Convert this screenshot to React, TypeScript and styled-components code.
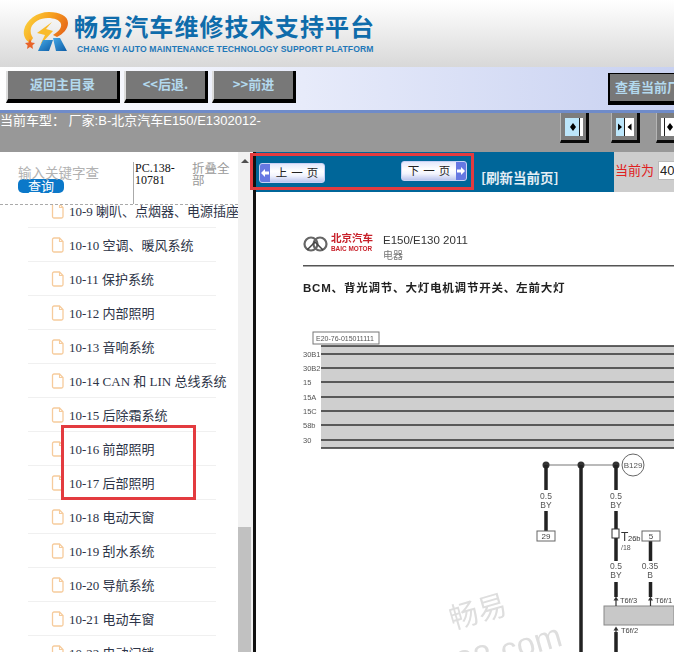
import React, { FC } from 'react';
import styled, { createGlobalStyle } from 'styled-components';

const GlobalStyle = createGlobalStyle`
  html, body {
    margin: 0;
    padding: 0;
    background: #fff;
  }
`;

const cjk = '"Noto Sans CJK SC", sans-serif';

const Page = styled.div`
  position: relative;
  width: 674px;
  height: 652px;
  overflow: hidden;
  display: flex;
  flex-direction: column;
  font-family: "Liberation Sans", ${cjk};
`;

const Header = styled.header`
  flex: 0 0 67px;
  box-sizing: border-box;
  display: flex;
  align-items: flex-start;
  gap: 6px;
  padding: 12px 0 0 23px;
  background: linear-gradient(180deg, #ffffff 0%, #f2f2f2 35%, #d8d8d8 100%);
`;

const BrandText = styled.div`
  display: flex;
  flex-direction: column;
`;

const BrandTitle = styled.div`
  font-family: ${cjk};
  font-size: 24px;
  line-height: 28px;
  font-weight: 700;
  letter-spacing: 1.1px;
  color: #0f6cab;
  white-space: nowrap;
`;

const BrandSub = styled.div`
  margin: 3px 0 0 3px;
  font-size: 8.6px;
  line-height: 12px;
  font-weight: 700;
  letter-spacing: 0.12px;
  color: #1f78b8;
  white-space: nowrap;
`;

const Toolbar = styled.nav`
  flex: 0 0 46px;
  box-sizing: border-box;
  display: flex;
  gap: 4px;
  padding: 4px 0 0 6px;
  overflow: hidden;
  border-bottom: 3px solid #6f8bc9;
  background: linear-gradient(90deg, #ffffff 0%, #e7ebfa 45%, #c8d1f1 100%);
`;

const ToolButton = styled.button<{ $width: number; $offset?: number; $framed?: boolean }>`
  flex: 0 0 ${({ $width }) => $width}px;
  height: 32px;
  box-sizing: border-box;
  margin: ${({ $framed }) => ($framed ? '2px' : '0')} 0 0 ${({ $offset }) => $offset ?? 0}px;
  padding: 0 0 3px;
  border-style: solid;
  border-width: ${({ $framed }) => ($framed ? '1px 1px 4px 2px' : '0 3px 4px 2px')};
  border-color: ${({ $framed }) =>
    $framed ? '#000 #000 #000 #000' : '#777 #000 #000 #ddd'};
  background: #787878;
  color: #b3d9ee;
  font-family: ${cjk};
  font-size: 13px;
  font-weight: 700;
  white-space: nowrap;
  text-align: ${({ $framed }) => ($framed ? 'left' : 'center')};
  text-indent: ${({ $framed }) => ($framed ? '5px' : '0')};
`;

const InfoBar = styled.div`
  flex: 0 0 39px;
  box-sizing: border-box;
  display: flex;
  align-items: flex-start;
  overflow: hidden;
  background: #989898;
`;

const CarInfo = styled.div`
  flex: 0 0 560px;
  font-size: 13px;
  line-height: 16px;
  color: #fff;
  white-space: nowrap;
`;

const ViewButton = styled.div<{ $gap?: number }>`
  flex: 0 0 29px;
  width: 29px;
  height: 30px;
  box-sizing: border-box;
  margin-left: ${({ $gap }) => $gap ?? 0}px;
  padding: 5px 3px 4px 4px;
  border-left: 1px solid #b5b5b5;
  border-right: 3px solid #0a0a0a;
  border-bottom: 3px solid #0a0a0a;
  background: #7d7d7d;
`;

const Main = styled.div`
  flex: 1;
  min-height: 0;
  display: flex;
`;

const Sidebar = styled.aside`
  flex: 0 0 238px;
  display: flex;
  flex-direction: column;
  min-height: 0;
  background: #fff;
`;

const SearchArea = styled.div`
  position: relative;
  z-index: 1;
  flex: 0 0 53px;
  box-sizing: border-box;
  display: flex;
  border-bottom: 1px dashed #aaa;
  background: #fff;
`;

const SearchField = styled.div`
  flex: 0 0 133px;
  box-sizing: border-box;
  padding: 13px 0 0 18px;
`;

const SearchHint = styled.div`
  font-family: ${cjk};
  font-size: 13.5px;
  line-height: 14px;
  color: #b2b2b2;
  white-space: nowrap;
`;

const SearchButton = styled.div`
  width: 46px;
  height: 14px;
  border-radius: 5px;
  background: #0b78c9;
  color: #fff;
  font-family: ${cjk};
  font-size: 13px;
  line-height: 14px;
  text-align: center;
`;

const PartNo = styled.div`
  flex: 0 0 59px;
  box-sizing: border-box;
  height: 42px;
  margin-top: 10px;
  padding: 0 0 0 1px;
  border-left: 1px solid #aaa;
  font-family: "Liberation Serif", serif;
  font-size: 12px;
  line-height: 12px;
  color: #111;
`;

const FoldAll = styled.div`
  width: 38px;
  padding-top: 10px;
  font-family: ${cjk};
  font-size: 12.5px;
  line-height: 12px;
  color: #999;
`;

const TreeClip = styled.div`
  flex: 1;
  min-height: 0;
  overflow: hidden;
`;

const TreeList = styled.ul`
  list-style: none;
  margin: -11px 0 0;
  padding: 0 0 0 28px;
`;

const TreeItem = styled.li`
  box-sizing: border-box;
  width: 188px;
  height: 34px;
  display: flex;
  align-items: center;
  gap: 5px;
  padding-left: 24px;
  border-bottom: 1px solid #f0f0f0;
  font-family: "Liberation Serif", ${cjk};
  font-size: 13px;
  color: #2d3447;
  white-space: nowrap;
`;

const Scrollbar = styled.div`
  position: relative;
  flex: 0 0 15px;
  background: #f1f1f1;
`;

const ScrollArrow = styled.div`
  position: absolute;
  top: 7px;
  left: 3px;
  width: 0;
  height: 0;
  border-left: 4px solid transparent;
  border-right: 4px solid transparent;
  border-bottom: 4px solid #505050;
`;

const ScrollThumb = styled.div`
  position: absolute;
  top: 375px;
  bottom: 0;
  left: 0;
  width: 13px;
  background: #c1c1c1;
`;

const Content = styled.section`
  flex: 1;
  min-width: 0;
  display: flex;
  flex-direction: column;
  border-left: 3px solid #111;
`;

const PagerRow = styled.div`
  flex: 0 0 40px;
  display: flex;
`;

const PagerBar = styled.div`
  flex: 0 0 358px;
  box-sizing: border-box;
  display: flex;
  align-items: flex-start;
  padding: 9px 0 0 3px;
  background: #006699;
`;

const PageButton = styled.div<{ $dir: 'prev' | 'next' }>`
  flex: 0 0 66px;
  height: 20px;
  box-sizing: border-box;
  display: flex;
  flex-direction: ${({ $dir }) => ($dir === 'prev' ? 'row' : 'row-reverse')};
  margin: ${({ $dir }) => ($dir === 'prev' ? '2px 0 0' : '0 0 0 76px')};
  border: 1px solid #c9d1f5;
  border-radius: 3px;
  background: linear-gradient(180deg, #e4e8fb 0%, #ffffff 40%, #f2f4fe 65%, #bcc6ee 100%);
  overflow: hidden;
`;

const PageArrow = styled.span`
  flex: 0 0 10px;
  display: flex;
  align-items: center;
  justify-content: center;
  background: #6678e2;
`;

const PageLabel = styled.span`
  flex: 1;
  padding-left: 4px;
  font-family: ${cjk};
  font-size: 11.5px;
  line-height: 17px;
  letter-spacing: 4px;
  text-align: center;
  color: #222;
`;

const RefreshLink = styled.a`
  margin: 7px 0 0 14px;
  font-family: ${cjk};
  font-size: 13.5px;
  line-height: 18px;
  font-weight: 700;
  color: #e4eef5;
  white-space: nowrap;
`;

const CurrentBox = styled.div`
  flex: 1;
  display: flex;
  align-items: flex-start;
  gap: 4px;
  padding: 9px 0 0 1px;
  background: #cdcdcd;
  overflow: hidden;
`;

const CurrentLabel = styled.span`
  font-family: ${cjk};
  font-size: 13px;
  line-height: 18px;
  color: #e02020;
  white-space: nowrap;
`;

const CurrentInput = styled.div`
  flex: 0 0 40px;
  box-sizing: border-box;
  height: 19px;
  padding-left: 1px;
  border: 1px solid #bbb;
  background: #fff;
  font-size: 13px;
  line-height: 17px;
  color: #222;
`;

const Sheet = styled.div`
  flex: 1;
  min-height: 0;
  background: #fff;
`;

const Drawing = styled.svg`
  display: block;
  filter: blur(0.35px);
  font-family: "Liberation Sans", ${cjk};
`;

const Callout = styled.div<{ $x: number; $y: number; $w: number; $h: number }>`
  position: absolute;
  left: ${({ $x }) => $x}px;
  top: ${({ $y }) => $y}px;
  width: ${({ $w }) => $w}px;
  height: ${({ $h }) => $h}px;
  box-sizing: border-box;
  border: 3px solid #e33b3f;
  pointer-events: none;
`;

const treeItems = [
  '10-9 喇叭、点烟器、电源插座',
  '10-10 空调、暖风系统',
  '10-11 保护系统',
  '10-12 内部照明',
  '10-13 音响系统',
  '10-14 CAN 和 LIN 总线系统',
  '10-15 后除霜系统',
  '10-16 前部照明',
  '10-17 后部照明',
  '10-18 电动天窗',
  '10-19 刮水系统',
  '10-20 导航系统',
  '10-21 电动车窗',
  '10-22 电动门锁',
];

const LogoMark: FC = () => (
  <svg width="45" height="42" viewBox="0 0 45 42">
    <defs>
      <linearGradient id="swirl" x1="0" y1="0.2" x2="1" y2="0.6">
        <stop offset="0" stopColor="#fbd43e" />
        <stop offset="0.5" stopColor="#f7a11e" />
        <stop offset="1" stopColor="#e5641a" />
      </linearGradient>
      <linearGradient id="legs" x1="0" y1="0" x2="1" y2="1">
        <stop offset="0" stopColor="#45a8e6" />
        <stop offset="1" stopColor="#0c5ca6" />
      </linearGradient>
    </defs>
    <path
      d="M7 31C2 28 0 23 1 18 3 8 14 0 26 0c11 0 19 4 19 11 0 6-5 11-11 14l-4-2c5-3 9-7 8-11-1-4-7-6-13-6-8 0-15 4-17 10-1 4 0 7 2 10z"
      fill="url(#swirl)"
    />
    <path d="M29 10L14 21l8 2-5 10 13-14-7-2z" fill="#f9bb2a" />
    <path d="M30 26h7l7 13H33z" fill="url(#legs)" />
    <path d="M20 28h10l-4 11H15z" fill="url(#legs)" />
    <path
      d="M7 27l1.500 3.500 3.500.5-2.600 2.400.6 3.600L7 35l-3 2 .6-3.600L2 31l3.500-.5z"
      fill="#e8642a"
    />
  </svg>
);

const FileIcon: FC = () => (
  <svg width="13" height="16" viewBox="0 0 13 16" style={{ flex: '0 0 13px', marginLeft: -1 }}>
    <path
      d="M1.500 2.500a1.500 1.500 0 0 1 1.500-1.500h5.500l3.500 3.500v9a1.500 1.500 0 0 1-1.500 1.500H3a1.500 1.500 0 0 1-1.500-1.500z"
      fill="#fff"
      stroke="#f6cb9c"
      strokeWidth="1.300"
    />
    <path d="M8.500 1v3.500H12" fill="none" stroke="#f6cb9c" strokeWidth="1.100" />
  </svg>
);

// the small layout switch glyphs: pale blue pane, black rule, black arrow heads
const PaneGlyph: FC<{ variant: 'left' | 'both' | 'right' }> = ({ variant }) => (
  <svg width="18" height="18" viewBox="0 0 18 18" style={{ display: 'block' }}>
    <rect width="18" height="18" fill="#fff" />
    {variant === 'left' && (
      <>
        <rect width="14" height="18" fill="#bce6fb" />
        <rect x="14" width="1" height="18" fill="#222" />
        <path d="M8 5l3 4-3 4-3-4z" fill="#000" />
      </>
    )}
    {variant === 'both' && (
      <>
        <rect width="8" height="18" fill="#bce6fb" />
        <rect x="8" width="1" height="18" fill="#222" />
        <path d="M2 5.500l4 3.500-4 3.500zM15.500 5.500L11.500 9l4 3.500z" fill="#000" />
      </>
    )}
    {variant === 'right' && (
      <>
        <rect x="3" width="1" height="18" fill="#222" />
        <path d="M9 5L6 9l3 4 3-4z" fill="#000" />
      </>
    )}
  </svg>
);

const Arrow: FC<{ flip?: boolean }> = ({ flip }) => (
  <svg width="8" height="8" viewBox="0 0 8 8">
    <path d={flip ? 'M8 4L4 0v2.500H0v3h4V8z' : 'M0 4l4-4v2.500h4v3H4V8z'} fill="#fff" />
  </svg>
);

const busLines = [
  { y: 154, label: '' },
  { y: 162, label: '30B1' },
  { y: 176, label: '30B2' },
  { y: 190, label: '15' },
  { y: 205, label: '15A' },
  { y: 219, label: '15C' },
  { y: 233, label: '58b' },
  { y: 248, label: '30' },
  { y: 256, label: '' },
];

const WireLabel: FC<{ x: number; y: number; top: string; bottom: string }> = ({
  x,
  y,
  top,
  bottom,
}) => (
  <g fontSize="8.500" fill="#555" textAnchor="middle">
    <text x={x} y={y}>{top}</text>
    <text x={x} y={y + 9}>{bottom}</text>
  </g>
);

// the wiring page, origin at x=256 y=192 of the window
const WiringDiagram: FC = () => (
  <Drawing width="418" height="460" viewBox="0 0 418 460">
    <g fill="none" stroke="#666" strokeWidth="2.200">
      <circle cx="55" cy="52" r="6.500" />
      <circle cx="64" cy="52" r="6.500" />
    </g>
    <path d="M51 58l8-8 8 8" fill="none" stroke="#444" strokeWidth="1.500" />
    <text x="75" y="50" fontSize="10.500" fontWeight="700" fill="#c8202a">北京汽车</text>
    <text x="75" y="59" fontSize="6.400" fontWeight="700" fill="#c8202a">BAIC MOTOR</text>
    <text x="127" y="52" fontSize="11.500" fill="#333">E150/E130 2011</text>
    <text x="127" y="67" fontSize="10" fill="#777">电器</text>
    <rect x="47" y="73" width="371" height="1.500" fill="#555" />
    <text x="47" y="100" fontSize="11.500" fontWeight="700" fill="#222" letterSpacing="0.800">
      BCM、背光调节、大灯电机调节开关、左前大灯
    </text>

    <rect x="57" y="140" width="66" height="12" fill="#fff" stroke="#777" />
    <text x="60" y="149" fontSize="7" fill="#555">E20-76-015011111</text>
    <rect x="65" y="154" width="353" height="102" fill="#cfcfcf" />
    {busLines.map((line) => (
      <g key={line.y}>
        <rect x="65" y={line.y - 0.75} width="353" height="1.500" fill="#333" />
        {line.label && (
          <text x="47" y={line.y + 3} fontSize="7.500" fill="#555">{line.label}</text>
        )}
      </g>
    ))}

    <rect x="290" y="272.500" width="70" height="1" fill="#777" />
    <g fill="#333">
      <circle cx="290" cy="273" r="3.500" />
      <circle cx="325" cy="273" r="3.500" />
      <circle cx="360" cy="273" r="3.500" />
    </g>
    <circle cx="377" cy="273" r="11" fill="#fff" stroke="#666" />
    <text x="377" y="276" fontSize="8" fill="#555" textAnchor="middle">B129</text>

    <g fill="#222">
      <rect x="288.250" y="273" width="3.500" height="25" />
      <rect x="288.250" y="319" width="3.500" height="20" />
      <rect x="323.250" y="273" width="3.500" height="187" />
      <rect x="358.250" y="273" width="3.500" height="25" />
      <rect x="358.250" y="319" width="3.500" height="50" />
      <rect x="358.250" y="390" width="3.500" height="15" />
      <rect x="392.750" y="341" width="3.500" height="28" />
      <rect x="392.750" y="390" width="3.500" height="15" />
      <rect x="358.250" y="440" width="3.500" height="20" />
    </g>
    <WireLabel x={290} y={307} top="0.5" bottom="BY" />
    <WireLabel x={360} y={307} top="0.5" bottom="BY" />
    <WireLabel x={360} y={377} top="0.5" bottom="BY" />
    <WireLabel x={394} y={377} top="0.35" bottom="B" />

    <rect x="281" y="339" width="18" height="10" fill="#fff" stroke="#666" />
    <text x="290" y="347" fontSize="8" fill="#444" textAnchor="middle">29</text>
    <rect x="386" y="339" width="18" height="10" fill="#fff" stroke="#666" />
    <text x="395" y="347" fontSize="8" fill="#444" textAnchor="middle">5</text>

    <rect x="356" y="337" width="7" height="9" fill="#fff" stroke="#333" />
    <text x="365" y="349" fontSize="12" fill="#333">T</text>
    <text x="372" y="349" fontSize="7.500" fill="#333">26b</text>
    <text x="365" y="358" fontSize="7" fill="#555">/18</text>

    <rect x="348" y="414" width="70" height="19" fill="#c8c8c8" stroke="#888" />
    <g fontSize="7.500" fill="#444">
      <text x="364" y="411">T6f/3</text>
      <text x="399" y="411">T6f/1</text>
      <text x="365" y="441">T6f/2</text>
    </g>
    <g fill="#333">
      <path d="M360 404.500l-2.500 4h1.900v5.500h1.200v-5.500h1.900zM394.500 404.500l-2.500 4h1.900v5.500h1.200v-5.500h1.900z" />
      <path d="M360 434.500l-2.500 4h1.900v3h1.200v-3h1.900z" />
    </g>

    <g fill="#dedede" textAnchor="middle">
      <text x="222" y="430" fontSize="29" transform="rotate(-16 222 420)">畅易</text>
      <text x="244" y="471" fontSize="33" transform="rotate(-16 244 460)">288.com</text>
    </g>
  </Drawing>
);

const App: FC = () => (
  <Page>
    <GlobalStyle />
    <Header>
      <LogoMark />
      <BrandText>
        <BrandTitle>畅易汽车维修技术支持平台</BrandTitle>
        <BrandSub>CHANG YI AUTO MAINTENANCE TECHNOLOGY SUPPORT PLATFORM</BrandSub>
      </BrandText>
    </Header>

    <Toolbar>
      <ToolButton $width={114}>返回主目录</ToolButton>
      <ToolButton $width={84}>&lt;&lt;后退.</ToolButton>
      <ToolButton $width={84}>&gt;&gt;前进</ToolButton>
      <ToolButton $width={110} $offset={308} $framed>查看当前厂家</ToolButton>
    </Toolbar>

    <InfoBar>
      <CarInfo>当前车型： 厂家:B-北京汽车E150/E1302012-</CarInfo>
      <ViewButton><PaneGlyph variant="left" /></ViewButton>
      <ViewButton $gap={22}><PaneGlyph variant="both" /></ViewButton>
      <ViewButton $gap={16}><PaneGlyph variant="right" /></ViewButton>
    </InfoBar>

    <Main>
      <Sidebar>
        <SearchArea>
          <SearchField>
            <SearchHint>输入关键字查</SearchHint>
            <SearchButton>查询</SearchButton>
          </SearchField>
          <PartNo>PC.138-10781</PartNo>
          <FoldAll>折叠全部</FoldAll>
        </SearchArea>
        <TreeClip>
          <TreeList>
            {treeItems.map((name) => (
              <TreeItem key={name}>
                <FileIcon />
                {name}
              </TreeItem>
            ))}
          </TreeList>
        </TreeClip>
      </Sidebar>

      <Scrollbar>
        <ScrollArrow />
        <ScrollThumb />
      </Scrollbar>

      <Content>
        <PagerRow>
          <PagerBar>
            <PageButton $dir="prev">
              <PageArrow><Arrow /></PageArrow>
              <PageLabel>上一页</PageLabel>
            </PageButton>
            <PageButton $dir="next">
              <PageArrow><Arrow flip /></PageArrow>
              <PageLabel>下一页</PageLabel>
            </PageButton>
            <RefreshLink>[刷新当前页]</RefreshLink>
          </PagerBar>
          <CurrentBox>
            <CurrentLabel>当前为</CurrentLabel>
            <CurrentInput>40</CurrentInput>
          </CurrentBox>
        </PagerRow>
        <Sheet>
          <WiringDiagram />
        </Sheet>
      </Content>
    </Main>

    <Callout $x={250} $y={153} $w={224} $h={37} />
    <Callout $x={61} $y={425} $w={135} $h={75} />
  </Page>
);

export default App;
